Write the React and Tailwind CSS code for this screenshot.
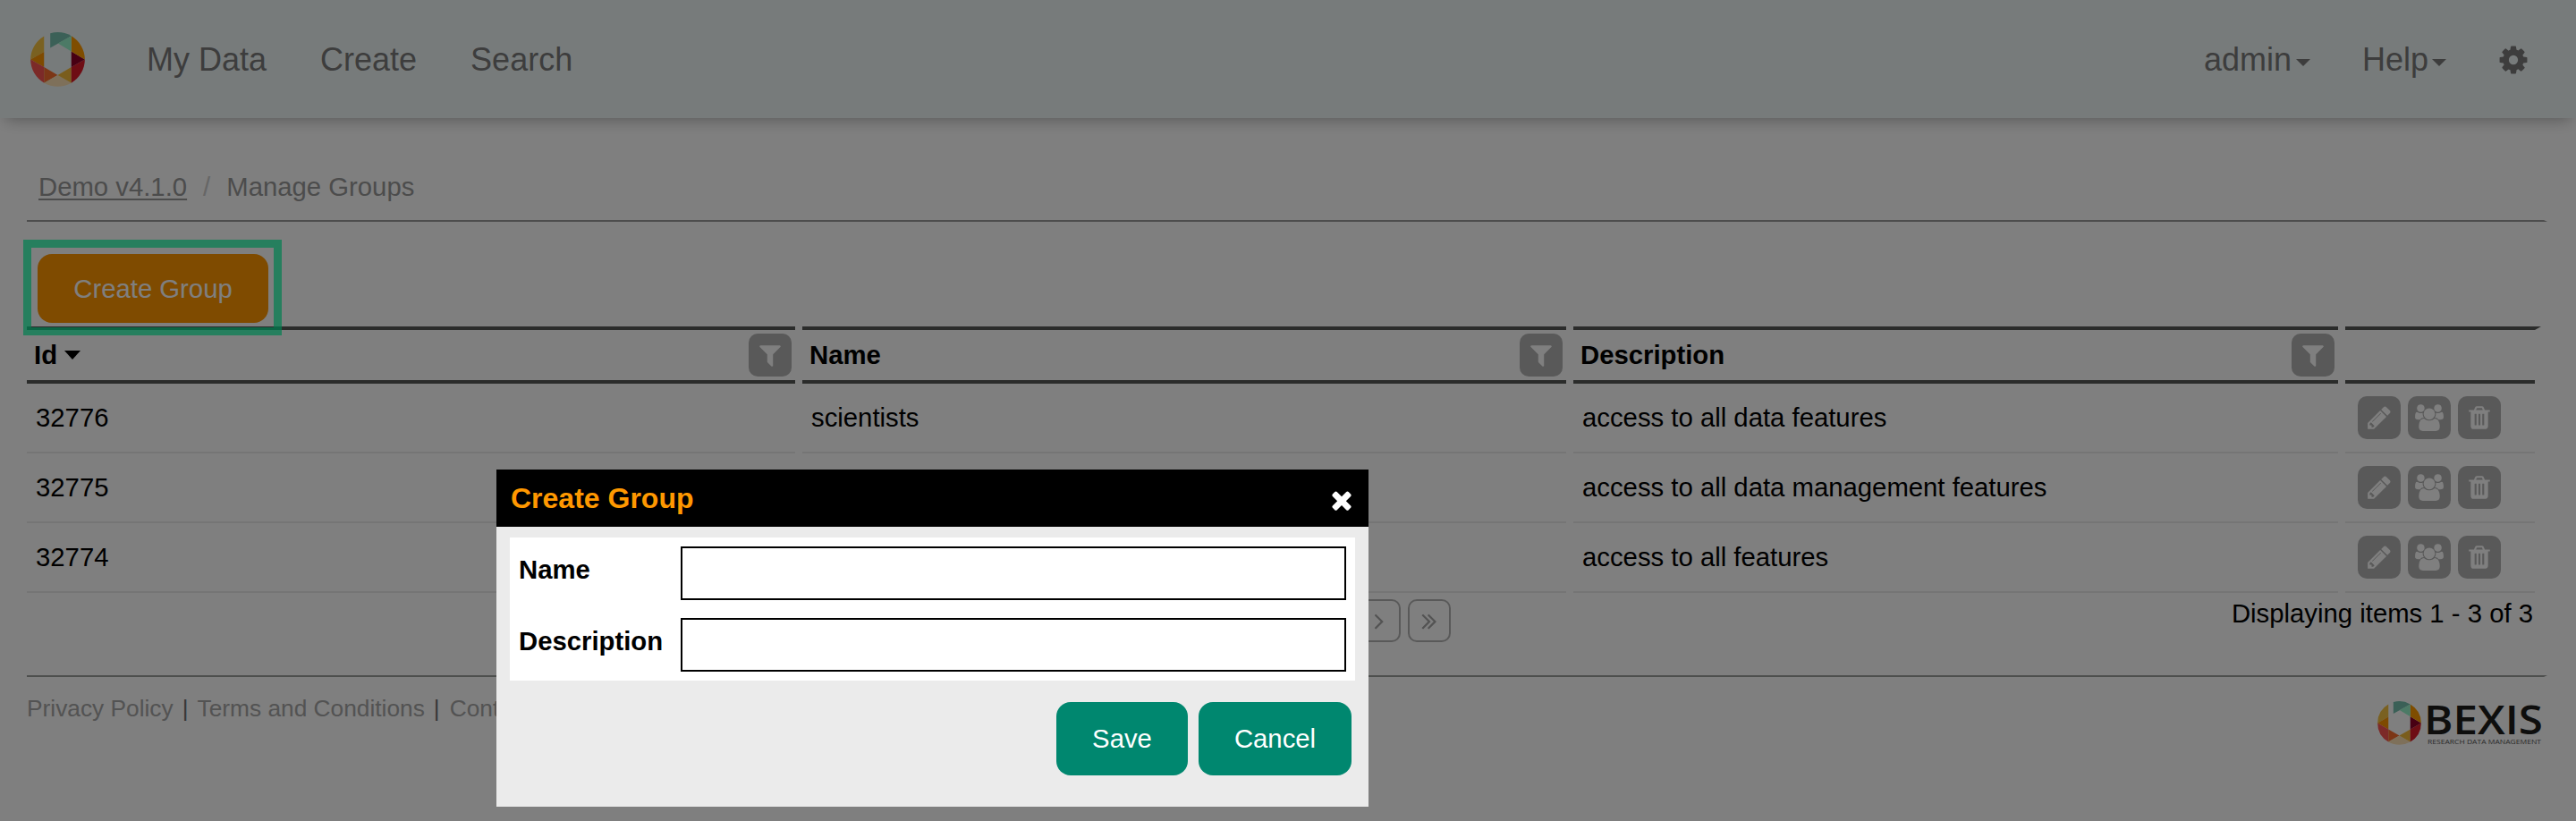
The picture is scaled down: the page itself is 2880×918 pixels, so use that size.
const PATHS = {
  cog: "M1152 896q0-106-75-181t-181-75-181 75-75 181 75 181 181 75 181-75 75-181zm512-109v222q0 12-8 23t-20 13l-185 28q-19 54-39 91 35 50 107 138 10 12 10 25t-9 23q-27 37-99 108t-94 71q-12 0-26-9l-138-108q-44 23-91 38-16 136-29 186-7 28-36 28h-222q-14 0-24.500-8.500t-11.500-21.500l-28-184q-49-16-90-37l-141 107q-10 9-25 9-14 0-25-11-126-114-165-168-7-10-7-23 0-12 8-23 15-21 51-66.500t54-70.500q-27-50-41-99l-183-27q-13-2-21-12.500t-8-23.500v-222q0-12 8-23t19-13l186-28q14-46 39-92-40-57-107-138-10-12-10-24 0-10 9-23 26-36 98.500-107.500t94.500-71.500q13 0 26 10l138 107q44-23 91-38 16-136 29-186 7-28 36-28h222q14 0 24.500 8.500t11.500 21.500l28 184q49 16 90 37l142-107q9-9 24-9 13 0 25 10 129 119 165 170 7 8 7 22 0 12-8 23-15 21-51 66.500t-54 70.500q26 50 41 98l183 28q13 2 21 12.500t8 23.500z",
  filter: "M1595 295q17 41-14 70l-493 493v742q0 42-39 59-13 5-25 5-27 0-45-19l-256-256q-19-19-19-45v-486l-493-493q-31-29-14-70 17-39 59-39h1280q42 0 59 39z",
  times: "M1490 1322q0 40-28 68l-136 136q-28 28-68 28t-68-28l-294-294-294 294q-28 28-68 28t-68-28l-136-136q-28-28-28-68t28-68l294-294-294-294q-28-28-28-68t28-68l136-136q28-28 68-28t68 28l294 294 294-294q28-28 68-28t68 28l136 136q28 28 28 68t-28 68l-294 294 294 294q28 28 28 68z",
  pencil: "M491 1536l91-91-235-235-91 91v107h128v128h107zm523-928q0-22-22-22-10 0-17 7l-542 542q-7 7-7 17 0 22 22 22 10 0 17-7l542-542q7-7 7-17zm-54-192l416 416-832 832h-416v-416zm683 96q0 53-37 90l-166 166-416-416 166-165q36-38 90-38 53 0 91 38l235 234q37 39 37 91z",
  trash: "M704 1376v-704q0-14-9-23t-23-9h-64q-14 0-23 9t-9 23v704q0 14 9 23t23 9h64q14 0 23-9t9-23zm256 0v-704q0-14-9-23t-23-9h-64q-14 0-23 9t-9 23v704q0 14 9 23t23 9h64q14 0 23-9t9-23zm256 0v-704q0-14-9-23t-23-9h-64q-14 0-23 9t-9 23v704q0 14 9 23t23 9h64q14 0 23-9t9-23zm-544-992h448l-48-117q-7-9-17-11h-317q-10 2-17 11zm928 32v64q0 14-9 23t-23 9h-96v948q0 83-47 143.500t-113 60.500h-832q-66 0-113-58.500t-47-141.500v-952h-96q-14 0-23-9t-9-23v-64q0-14 9-23t23-9h309l70-167q15-37 54-63t79-26h320q40 0 79 26t54 63l70 167h309q14 0 23 9t9 23z",
  users: "M657 896q-162 5-265 128h-134q-82 0-138-40.500t-56-118.500q0-353 124-353 6 0 43.500 21t97.500 42.500 119 21.500q67 0 133-23-5 37-5 66 0 139 81 256zm1071 637q0 120-73 189.500t-194 69.500h-874q-121 0-194-69.500t-73-189.500q0-53 3.500-103.500t14-109 26.500-108.500 43-97.500 62-81 85.500-53.500 111.500-20q10 0 43 21.500t73 48 107 48 135 21.500 135-21.500 107-48 73-48 43-21.500q61 0 111.500 20t85.500 53.500 62 81 43 97.500 26.500 108.500 14 109 3.500 103.500zm-1024-1277q0 106-75 181t-181 75-181-75-75-181 75-181 181-75 181 75 75 181zm704 384q0 159-112.500 271.500t-271.500 112.500-271.500-112.500-112.500-271.500 112.500-271.500 271.500-112.500 271.500 112.500 112.500 271.500zm576 225q0 78-56 118.500t-138 40.500h-134q-103-123-265-128 81-117 81-256 0-29-5-66 66 23 133 23 59 0 119-21.500t97.500-42.500 43.500-21q124 0 124 353zm-128-609q0 106-75 181t-181 75-181-75-75-181 75-181 181-75 181 75 75 181z",
  right: "M1171 960q0 13-10 23l-466 466q-10 10-23 10t-23-10l-50-50q-10-10-10-23t10-23l393-393-393-393q-10-10-10-23t10-23l50-50q10-10 23-10t23 10l466 466q10 10 10 23z",
  last: "M979 960q0 13-10 23l-466 466q-10 10-23 10t-23-10l-50-50q-10-10-10-23t10-23l393-393-393-393q-10-10-10-23t10-23l50-50q10-10 23-10t23 10l466 466q10 10 10 23zm384 0q0 13-10 23l-466 466q-10 10-23 10t-23-10l-50-50q-10-10-10-23t10-23l393-393-393-393q-10-10-10-23t10-23l50-50q10-10 23-10t23 10l466 466q10 10 10 23z",
};

function Icon({ name, className = "size-[30px]" }) {
  return (
    <svg viewBox="0 0 1792 1792" className={className} fill="currentColor" aria-hidden="true">
      <path d={PATHS[name]} />
    </svg>
  );
}

function UsersIcon() {
  return (
    <svg viewBox="0 0 2048 1792" className="h-[30px] w-[34px]" fill="currentColor" aria-hidden="true">
      <path d={PATHS.users} />
    </svg>
  );
}

function Ring({ className }) {
  return (
    <svg viewBox="0 0 184 184" className={className} aria-hidden="true">
      <path d="M46 13.500A91.500 91.500 0 0 0 .5 92L46 66Z" fill="#f5c242" />
      <path d="M46 66L.5 92L46 118Z" fill="#fd9400" />
      <path d="M.5 92A91.500 91.500 0 0 0 46 171L46 118Z" fill="#f85450" />
      <path d="M46 118L92 145L46 171Z" fill="#f96c2c" />
      <path d="M92 145L46 171A91.500 91.500 0 0 0 138 171Z" fill="#fde0b4" />
      <path d="M92 145L138 118L138 171Z" fill="#f5bb38" />
      <path d="M138 118L183.500 92A91.500 91.500 0 0 1 138 171Z" fill="#dd1a28" />
      <path d="M138 65L183.500 92L138 118Z" fill="#900026" />
      <path d="M138 13A91.500 91.500 0 0 1 183.500 92L138 65Z" fill="#ff9a00" />
      <path d="M67 4A91.500 91.500 0 0 1 138 13L67 53Z" fill="#77c0ae" />
      <path d="M138 13L138 65L93 38Z" fill="#98f5cc" />
    </svg>
  );
}

function Caret({ className }) {
  return (
    <svg viewBox="0 0 16 8" preserveAspectRatio="none" className={className} fill="currentColor" aria-hidden="true">
      <path d="M0 0H16L8 8Z" />
    </svg>
  );
}

function SquareButton({ label, children }) {
  return (
    <button aria-label={label} className="flex size-12 items-center justify-center rounded-[10px] bg-[#b3b3b3] text-white">
      {children}
    </button>
  );
}

const COLS = "grid grid-cols-[859px_854px_855px_219px] gap-x-2";

function HeadCell({ title, sorted, className = "" }) {
  return (
    <div className={"flex h-16 items-center justify-between border-y-4 border-[#565856] pr-1 " + className}>
      <span className="flex items-center">
        {title}
        {sorted && <Caret className="ml-2 h-[10px] w-[18px]" />}
      </span>
      <SquareButton label={"Filter " + title}>
        <Icon name="filter" />
      </SquareButton>
    </div>
  );
}

const ROWS = [
  ["32776", "scientists", "access to all data features"],
  ["32775", "data managers", "access to all data management features"],
  ["32774", "administrators", "access to all features"],
];

function Row({ row }) {
  const cell = "flex h-[78px] items-center border-b-2 border-[#eaeaea] ";
  return (
    <div className={COLS}>
      <div className={cell + "pl-[10px]"}>{row[0]}</div>
      <div className={cell + "pl-[10px]"}>{row[1]}</div>
      <div className={cell + "pl-[10px]"}>{row[2]}</div>
      <div className={cell + "mr-[7px] gap-2 pl-[14px]"}>
        <SquareButton label="Edit"><Icon name="pencil" /></SquareButton>
        <SquareButton label="Members"><UsersIcon /></SquareButton>
        <SquareButton label="Delete"><Icon name="trash" /></SquareButton>
      </div>
    </div>
  );
}

function PagerButton({ name }) {
  return (
    <button className="flex size-12 items-center justify-center rounded-[10px] border-2 border-[#b3b3b3] text-[#a6a6a6]">
      <Icon name={name} className="size-[30px] shrink-0" />
    </button>
  );
}

function Modal() {
  const field = "h-[60px] w-[744px] border-2 border-black bg-white outline-none";
  return (
    <div role="dialog" className="absolute left-[555px] top-[525px] h-[377px] w-[975px] bg-[#ebebeb]">
      <div className="flex h-16 items-center justify-between bg-black pl-4 pr-[14px]">
        <h2 className="text-[32px] font-bold leading-none text-[#ff9800]">Create Group</h2>
        <button aria-label="Close" className="pt-[3px] text-white"><Icon name="times" className="size-8" /></button>
      </div>
      <div className="mx-[15px] mt-3 flex h-40 flex-col gap-5 bg-white py-[10px] pl-[10px] pr-[10px] font-bold">
        <label className="flex justify-between leading-[51px]">Name<input className={field} /></label>
        <label className="flex justify-between leading-[51px]">Description<input className={field} /></label>
      </div>
      <div className="mt-6 flex justify-end gap-3 pr-[19px] text-white">
        <button className="h-[82px] w-[147px] rounded-2xl bg-[#00876f]">Save</button>
        <button className="h-[82px] w-[171px] rounded-2xl bg-[#00876f]">Cancel</button>
      </div>
    </div>
  );
}

export default function App() {
  return (
    <div className="relative h-[918px] w-[2880px] overflow-hidden bg-white font-['Liberation_Sans',Arial,sans-serif] text-[29.3px] leading-8 text-black">
      <nav className="flex h-[132px] items-center bg-[#eff6f6] pl-[34px] pr-[52px] text-[36px] text-[#7a7a7a] shadow-[0_8px_16px_-6px_rgba(0,0,0,0.3)]">
        <Ring className="size-[61px]" />
        <div className="ml-[69px] flex gap-[60px] pt-0.5">
          <a>My Data</a>
          <a>Create</a>
          <a>Search</a>
        </div>
        <div className="ml-auto flex items-center pt-0.5">
          <a className="flex items-center">admin<Caret className="ml-[5px] mt-[5px] h-2 w-4" /></a>
          <a className="ml-[58px] flex items-center">Help<Caret className="ml-[4px] mt-[5px] h-2 w-4" /></a>
          <Icon name="cog" className="ml-[57px] size-9" />
        </div>
      </nav>

      <main className="pl-[30px]">
        <div className="flex h-[116px] w-[2818px] border-b-2 border-r-4 border-b-[#9a9a9a] border-r-transparent pl-[13px] pt-[61px] text-[#999999]">
          <a className="h-8 underline decoration-2 underline-offset-[3px]">Demo v4.1.0</a>
          <span className="ml-[18px] text-[#cccccc]">/</span>
          <span className="ml-[18px]">Manage Groups</span>
        </div>

        <div className="relative flex h-[117px] pl-3 pt-9">
          <button className="h-[77px] w-[258px] rounded-2xl bg-[#ff9600] text-white">Create Group</button>
          <div className="absolute -left-1 top-5 h-[107px] w-[289px] border-[9px] border-[rgba(0,255,161,0.7)]" />
        </div>

        <div className={COLS + " font-bold"}>
          <HeadCell title="Id" sorted className="pl-2" />
          <HeadCell title="Name" className="pl-2" />
          <HeadCell title="Description" className="pl-2" />
          <div className="h-16 border-r-[7px] border-t-4 border-r-transparent border-t-[#565856]">
            <div className="h-[60px] border-b-4 border-[#565856]" />
          </div>
        </div>
        {ROWS.map((row) => <Row key={row[0]} row={row} />)}

        <div className="flex h-[92px] items-start pr-12 pt-[7px]">
          <div className="ml-[1488px] flex gap-2">
            <PagerButton name="right" />
            <PagerButton name="last" />
          </div>
          <span className="ml-auto">Displaying items 1 - 3 of 3</span>
        </div>
      </main>

      <footer className="ml-[30px] flex h-[163px] w-[2818px] justify-between border-r-4 border-t-2 border-r-transparent border-t-[#9a9e9a] text-[26.3px]">
        <div className="flex pt-[19px] text-[#a6a6a6]">
          <a>Privacy Policy</a>
          <span className="mx-[10px] text-[#707070]">|</span>
          <a>Terms and Conditions</a>
          <span className="ml-[10px] mr-[11px] text-[#707070]">|</span>
          <a>Contact</a>
        </div>
        <div className="flex pt-[27px]">
          <Ring className="size-[49px] shrink-0" />
          <svg viewBox="0 0 130 60" className="ml-[7px] h-[60px] w-[130px] overflow-visible">
            <text x="-4" y="37" fontFamily="'Open Sans','Noto Sans',sans-serif" fontSize="45" fontWeight="650" textLength="133" lengthAdjust="spacingAndGlyphs" fill="#1d1d1b">BEXIS</text>
            <text x="0" y="48" fontFamily="'Open Sans','Noto Sans',sans-serif" fontSize="8" textLength="127" lengthAdjust="spacingAndGlyphs" fill="#555555">RESEARCH DATA MANAGEMENT</text>
          </svg>
        </div>
      </footer>

      <div className="absolute inset-0 bg-black/50" />
      <Modal />
    </div>
  );
}
